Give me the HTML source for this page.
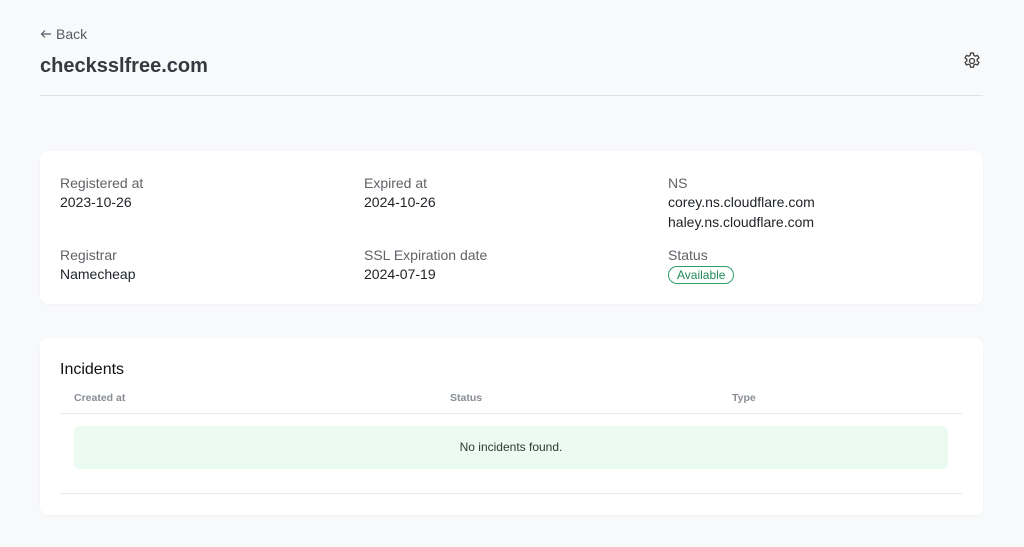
<!DOCTYPE html>
<html><head><meta charset="utf-8"><style>
*{box-sizing:border-box;margin:0;padding:0}
body{width:1024px;height:547px;background:#f8f9fa;font-family:"Liberation Sans",sans-serif;position:relative;overflow:hidden;color:#212529}
.abs{position:absolute}
.back{left:40px;top:26px;font-size:14px;color:#555d66}
h1{position:absolute;left:40px;top:55px;font-size:20px;font-weight:bold;color:#343a40}
.hr{left:40px;top:95px;width:943px;height:1px;background:#dee2e6}
.card{position:absolute;left:40px;width:943px;background:#fff;border-radius:8px;box-shadow:0 1px 2px rgba(0,0,0,.03)}
.lbl{font-size:14px;color:#5f6368;position:absolute}
.val{font-size:14px;color:#212529;position:absolute;line-height:21px}
.badge{position:absolute;left:628px;top:115px;border:1px solid #2e9e6b;color:#1f8a57;border-radius:10px;font-size:12px;padding:1px 8px;line-height:14px}
.th{position:absolute;top:54px;font-size:10.5px;font-weight:bold;color:#888e94}
</style></head><body>
<div class="abs back"><svg width="12" height="10" viewBox="0 0 12 10" fill="none" stroke="#555d66" stroke-width="1.2" style="margin-right:4px;vertical-align:0"><path d="M11 5H1.5M5 1.5L1.5 5 5 8.5"/></svg>Back</div>
<h1>checksslfree.com</h1>
<svg class="abs" style="left:962px;top:51px" width="20" height="20" viewBox="0 0 24 24" fill="none" stroke="#444" stroke-width="1.6"><path d="M10.3 2.5h3.4l.5 2.7 1.8 1 2.6-.9 1.7 2.9-2.1 1.8v2l2.1 1.8-1.7 2.9-2.6-.9-1.8 1-.5 2.7h-3.4l-.5-2.7-1.8-1-2.6.9-1.7-2.9 2.1-1.8v-2L3.7 8.2l1.7-2.9 2.6.9 1.8-1z"/><circle cx="12" cy="12" r="3"/></svg>
<div class="abs hr"></div>
<div class="card" style="top:151px;height:153px">
<div class="lbl" style="left:20px;top:24px">Registered at</div>
<div class="val" style="left:20px;top:41px">2023-10-26</div>
<div class="lbl" style="left:324px;top:24px">Expired at</div>
<div class="val" style="left:324px;top:41px">2024-10-26</div>
<div class="lbl" style="left:628px;top:24px">NS</div>
<div class="val" style="left:628px;top:41px;line-height:20px">corey.ns.cloudflare.com<br>haley.ns.cloudflare.com</div>
<div class="lbl" style="left:20px;top:96px">Registrar</div>
<div class="val" style="left:20px;top:113px">Namecheap</div>
<div class="lbl" style="left:324px;top:96px">SSL Expiration date</div>
<div class="val" style="left:324px;top:113px">2024-07-19</div>
<div class="lbl" style="left:628px;top:96px">Status</div>
<div class="badge">Available</div>
</div>
<div class="card" style="top:338px;height:177px">
<div class="abs" style="left:20px;top:23px;font-size:16px;color:#111">Incidents</div>
<div class="th" style="left:34px">Created at</div>
<div class="th" style="left:410px">Status</div>
<div class="th" style="left:692px">Type</div>
<div class="abs" style="left:20px;top:75px;width:902px;height:1px;background:#e6e8ea"></div>
<div class="abs" style="left:34px;top:88px;width:874px;height:43px;background:#ebfbf2;border-radius:6px;text-align:center;line-height:43px;font-size:12px;color:#2b3b33">No incidents found.</div>
<div class="abs" style="left:20px;top:155px;width:902px;height:1px;background:#e6e8ea"></div>
</div>
</body></html>
